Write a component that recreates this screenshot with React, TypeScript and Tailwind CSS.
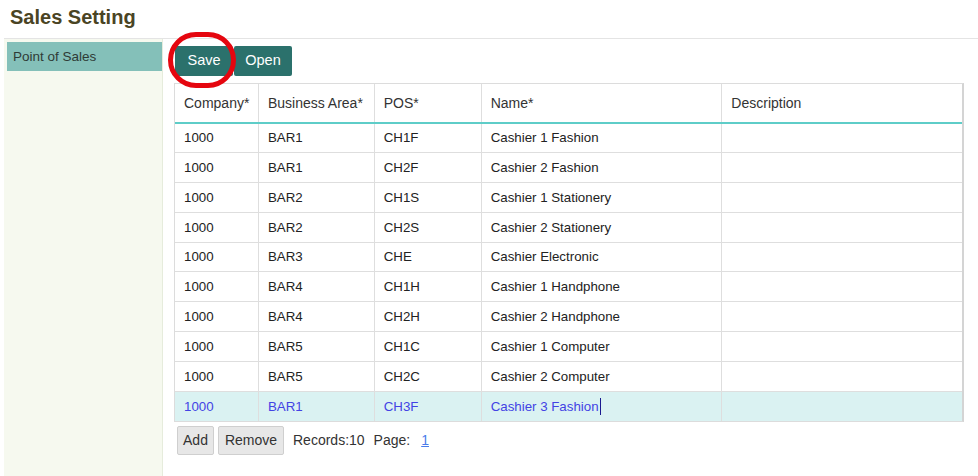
import React from "react";

const rows = [
  { company: "1000", area: "BAR1", pos: "CH1F", name: "Cashier 1 Fashion", h: "h-[29px]" },
  { company: "1000", area: "BAR1", pos: "CH2F", name: "Cashier 2 Fashion", h: "h-[30px]" },
  { company: "1000", area: "BAR2", pos: "CH1S", name: "Cashier 1 Stationery", h: "h-[30px]" },
  { company: "1000", area: "BAR2", pos: "CH2S", name: "Cashier 2 Stationery", h: "h-[30px]" },
  { company: "1000", area: "BAR3", pos: "CHE", name: "Cashier Electronic", h: "h-[29px]" },
  { company: "1000", area: "BAR4", pos: "CH1H", name: "Cashier 1 Handphone", h: "h-[30px]" },
  { company: "1000", area: "BAR4", pos: "CH2H", name: "Cashier 2 Handphone", h: "h-[30px]" },
  { company: "1000", area: "BAR5", pos: "CH1C", name: "Cashier 1 Computer", h: "h-[30px]" },
  { company: "1000", area: "BAR5", pos: "CH2C", name: "Cashier 2 Computer", h: "h-[30px]" },
  { company: "1000", area: "BAR1", pos: "CH3F", name: "Cashier 3 Fashion", h: "h-[29px]", active: true },
];

const cols = ["w-[84px]", "w-[116px]", "w-[107px]", "w-[241px]", "w-[240px]"];

function Cell({ w, children, last }: { w: string; children?: React.ReactNode; last?: boolean }) {
  return (
    <div className={`${w} h-full flex items-center pl-[9px] ${last ? "" : "border-r border-[#dedede]"}`}>
      {children}
    </div>
  );
}

export default function App() {
  return (
    <div className="w-[978px] h-[476px] bg-white flex flex-col font-['Liberation_Sans',Arial,sans-serif] text-[#222]">
      <h1 className="h-[38px] pl-[10px] pt-[6px] text-[20px] leading-[22px] font-bold text-[#4a4424]">
        Sales Setting
      </h1>
      <div className="ml-[4px] border-t border-[#e4e4e4] flex flex-1">
        <aside className="w-[159px] bg-[#f6f9ef] border-r border-[#e6ecdc] pt-[3px] pl-[3px]">
          <div className="h-[29px] bg-[#84c0b9] pl-[6px] text-[13.5px] leading-[29px] text-[#2f3b36]">
            Point of Sales
          </div>
        </aside>

        <main className="relative flex-1 pl-[11px] pt-[7px]">
          <div className="absolute left-[5px] top-[-7px] w-[68px] h-[56px] rounded-full border-[5px] border-[#e5060f] z-10" />

          <div className="flex ml-[1px] gap-[1px]">
            <button className="h-[30px] w-[58px] bg-[#2b716c] text-white text-[14.5px] rounded-[2px]">Save</button>
            <button className="h-[30px] w-[58px] bg-[#2b716c] text-white text-[14.5px] rounded-[2px]">Open</button>
          </div>

          <div className="mt-[7px] w-[790px] border-t border-l border-[#dcdcdc] border-r-2 border-r-[#d4d4d4] border-b border-b-[#dcdcdc] text-[13.3px]">
            <div className="flex h-[40px] border-b-2 border-[#5ecdc8] text-[14px] text-[#333]">
              <Cell w={cols[0]}>Company*</Cell>
              <Cell w={cols[1]}>Business Area*</Cell>
              <Cell w={cols[2]}>POS*</Cell>
              <Cell w={cols[3]}>Name*</Cell>
              <Cell w={cols[4]} last>Description</Cell>
            </div>
            {rows.map((r, i) => (
              <div
                key={i}
                className={`flex ${r.h} ${i < rows.length - 1 ? "border-b border-[#dedede]" : ""} ${
                  r.active ? "bg-[#daf2f2] text-[#4343e4]" : "bg-white"
                }`}
              >
                <Cell w={cols[0]}>{r.company}</Cell>
                <Cell w={cols[1]}>{r.area}</Cell>
                <Cell w={cols[2]}>{r.pos}</Cell>
                <Cell w={cols[3]}>
                  {r.name}
                  {r.active && <span className="inline-block w-[1px] h-[17px] bg-[#1a1a90] ml-[1px]" />}
                </Cell>
                <Cell w={cols[4]} last />
              </div>
            ))}
          </div>

          <div className="flex items-center mt-[4px] ml-[3px] text-[14px] text-[#333]">
            <button className="h-[29px] w-[37px] bg-[#e7e7e7] border border-[#cfcfcf] rounded-[2px] text-[14px] text-[#333]">
              Add
            </button>
            <button className="h-[29px] w-[66px] ml-[4px] bg-[#e7e7e7] border border-[#cfcfcf] rounded-[2px] text-[14px] text-[#333]">
              Remove
            </button>
            <span className="ml-[9px]">Records:10</span>
            <span className="ml-[9px]">Page:</span>
            <a className="ml-[11px] text-[#4a7bea] underline">1</a>
          </div>
        </main>
      </div>
    </div>
  );
}
